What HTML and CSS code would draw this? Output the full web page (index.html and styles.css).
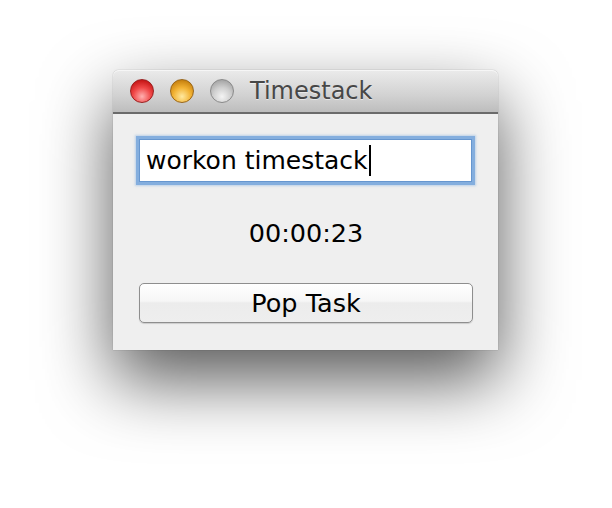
FILE: index.html
```html
<!DOCTYPE html>
<html>
<head>
<meta charset="utf-8">
<link rel="stylesheet" href="styles.css">
</head>
<body>
<div class="window">
  <div class="titlebar">
    <span class="light red"></span>
    <span class="light yellow"></span>
    <span class="light gray"></span>
    <span class="title">Timestack</span>
  </div>
  <div class="content">
    <div class="field"><span class="field-text">workon timestack</span><span class="caret"></span></div>
    <div class="timer">00:00:23</div>
    <div class="button">Pop Task</div>
  </div>
</div>
</body>
</html>
```
FILE: styles.css
```css
html, body {
  margin: 0;
  background: #ffffff;
}
body {
  min-height: 508px;
  box-sizing: border-box;
  padding: 70px 0 0 113px;
  font-family: "DejaVu Sans", sans-serif;
  overflow: hidden;
}
.window {
  width: 385px;
  height: 280px;
  display: flex;
  flex-direction: column;
  border-radius: 6px 6px 0 0;
  background: #efefef;
  box-shadow: 0 30px 70px rgba(0,0,0,0.66), 0 0 1px rgba(0,0,0,0.5);
}
.titlebar {
  height: 42px;
  flex: none;
  display: flex;
  align-items: center;
  padding-left: 17px;
  border-radius: 6px 6px 0 0;
  background: linear-gradient(#ebebeb, #d2d2d2 60%, #bdbdbd);
  border-bottom: 2px solid #6b6b6b;
  box-shadow: inset 0 1px 0 #f6f6f6;
}
.light {
  width: 24px;
  height: 24px;
  border-radius: 50%;
  margin-right: 16px;
  box-sizing: border-box;
}
.red {
  background: radial-gradient(circle at 50% 75%, #ffb0b0 0, #f04848 45%, #c81818 80%);
  border: 1px solid #9a2020;
}
.yellow {
  background: radial-gradient(circle at 50% 75%, #ffe9a0 0, #f2b233 45%, #c98310 80%);
  border: 1px solid #99661a;
}
.gray {
  background: radial-gradient(circle at 50% 75%, #f4f4f4 0, #cfcfcf 45%, #a8a8a8 80%);
  border: 1px solid #8a8a8a;
}
.title {
  margin-left: 0;
  font-size: 24px;
  color: #474747;
  text-shadow: 0 1px 0 rgba(255,255,255,0.5);
}
.content {
  flex: 1;
  display: flex;
  flex-direction: column;
  padding: 25px 25px 0 26px;
}
.field {
  height: 43px;
  box-sizing: border-box;
  margin-right: 1px;
  background: #fff;
  border: 1px solid #6696cf;
  box-shadow: 0 0 0 3px #84aede, 0 0 2px 4px rgba(140,180,225,0.5);
  display: flex;
  align-items: center;
  padding-left: 6px;
}
.field-text {
  font-size: 25px;
  color: #000;
}
.caret {
  width: 2px;
  height: 31px;
  background: #000;
  margin-left: 1px;
}
.timer {
  margin-top: 31px;
  text-align: center;
  font-size: 25.5px;
  color: #000;
  height: 40px;
  line-height: 40px;
}
.button {
  margin-top: 30px;
  height: 40px;
  box-sizing: border-box;
  border: 1px solid #8e8e8e;
  border-radius: 5px;
  background: linear-gradient(#ffffff, #f6f6f6 45%, #ececec 50%, #eeeeee);
  box-shadow: 0 1px 1px rgba(0,0,0,0.15);
  text-align: center;
  font-size: 25.5px;
  line-height: 38px;
  color: #000;
}
```
